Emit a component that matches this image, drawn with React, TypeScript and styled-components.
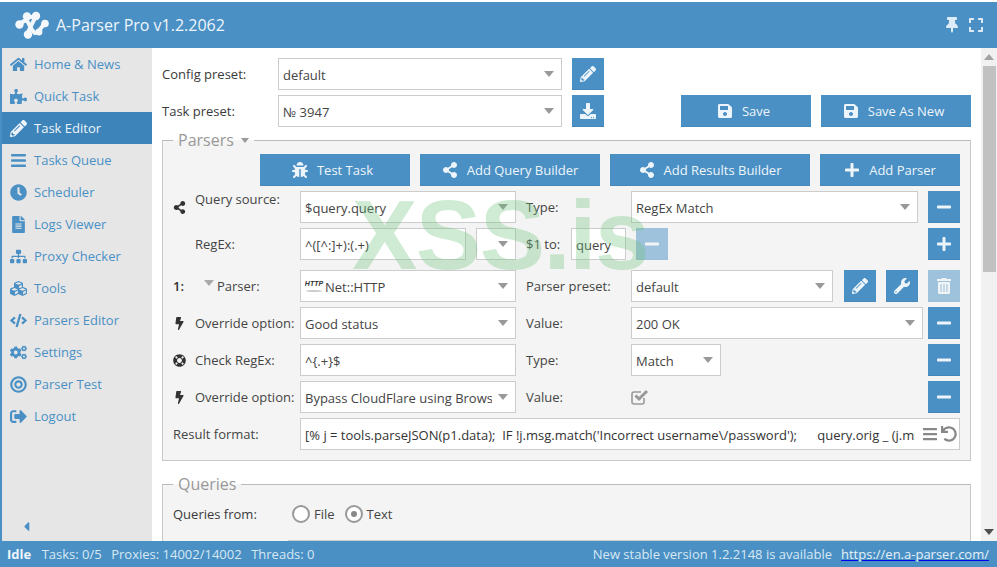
import React from 'react';
import styled, { createGlobalStyle } from 'styled-components';
import {
  FaHome, FaPuzzlePiece, FaPencilAlt, FaBars, FaClock, FaFileAlt, FaSitemap, FaCubes, FaCode, FaCogs,
  FaBullseye, FaSignOutAlt, FaShareAlt, FaBolt, FaLifeRing, FaBug, FaPlus, FaMinus, FaSave, FaDownload,
  FaWrench, FaTrashAlt, FaThumbtack, FaExpand, FaUndo, FaCaretLeft,
} from 'react-icons/fa';

const Global = createGlobalStyle`
  html, body { margin: 0; padding: 0; background: #fff; overflow: hidden; }
  * { box-sizing: border-box; }
  body { font-family: "Open Sans", "Liberation Sans", sans-serif; font-size: 13px; color: #444; }
`;

const Page = styled.div`
  width: 997px; height: 567px; padding-top: 2px;
  display: flex; flex-direction: column; overflow: hidden;
`;
const Header = styled.header`
  height: 46px; flex: none; background: #4a90c5; color: #fff;
  display: flex; align-items: center; padding: 0 13px 0 15px;
`;
const Title = styled.h1`
  margin: 0 0 0 7px; flex: 1; font-size: 16px; font-weight: 400; color: #eef5fa;
`;
const HeaderTools = styled.div`
  display: flex; align-items: center; gap: 8px; color: #dcebf5; font-size: 16px;
`;
const Body = styled.div`
  flex: 1; min-height: 0; display: flex;
`;
const Sidebar = styled.nav`
  width: 152px; flex: none; border-left: 2px solid #4a90c5; background: #e6e6e6;
  display: flex; flex-direction: column;
`;
const NavItem = styled.a<{ $active?: boolean }>`
  height: 32px; flex: none; display: flex; align-items: center; padding-left: 8px;
  background: ${p => (p.$active ? '#3c84ba' : 'transparent')};
  color: ${p => (p.$active ? '#eef5fa' : '#4a90c5')};
`;
const NavIcon = styled.span`
  width: 24px; flex: none; display: flex; align-items: center; font-size: 17px;
`;
const Collapse = styled.div`
  margin-top: auto; padding: 0 0 7px 17px; color: #4a90c5; font-size: 15px; line-height: 0;
`;
const Main = styled.main`
  flex: 1; min-width: 0; padding: 10px 10px 0; overflow: hidden; position: relative; background: #fff;
`;
const Scrollbar = styled.div`
  width: 16px; flex: none; background: #f1f1f1; display: flex; flex-direction: column; align-items: center;
`;
const ScrollUp = styled.div`
  margin-top: 6px; border: 5px solid transparent; border-top: 0; border-bottom: 6px solid #a3a3a3;
`;
const ScrollThumb = styled.div`
  width: 13px; height: 206px; margin-top: 6px; background: #c1c1c1;
`;
const ScrollDown = styled.div`
  margin-top: auto; margin-bottom: 6px; border: 5px solid transparent; border-bottom: 0; border-top: 6px solid #505050;
`;
const PresetRow = styled.div`
  display: flex; align-items: center; height: 32px; margin-bottom: 5px;
`;
const PresetLabel = styled.span`
  width: 116px; flex: none; color: #3a3a3a;
`;
const Select = styled.div<{ $w?: number }>`
  width: ${p => p.$w}px; flex: none;
  height: 32px; background: #fff; border: 1px solid #ccc;
  display: flex; align-items: center; padding: 0 6px 0 4px; color: #444; min-width: 0;
`;
const SelectText = styled.span`
  flex: 1; min-width: 0; overflow: hidden; white-space: nowrap; display: flex; align-items: center; padding-top: 1px;
`;
const Caret = styled.span`
  flex: none; width: 0; height: 0; border: 5px solid transparent; border-bottom: 0; border-top: 6px solid #999;
  margin-right: 1px; margin-left: 6px;
`;
const TextField = styled.input<{ $w?: number }>`
  width: ${p => p.$w}px; flex: none;
  height: 32px; background: #fff; border: 1px solid #ccc; padding: 1px 4px 0; margin: 0; outline: 0;
  font: inherit; color: #444; min-width: 0;
`;
const Btn = styled.button<{ $w?: number; $faded?: boolean; $nudge?: boolean }>`
  width: ${p => (p.$w ? `${p.$w}px` : '32px')}; height: 32px; flex: none; margin: 0;
  padding: 0 ${p => (p.$nudge ? '5px' : '0')} 0 0;
  border: 0; border-bottom: 1px solid #4687bb;
  background: #4a90c5; color: #eef5fa; font: inherit; font-size: 13px;
  opacity: ${p => (p.$faded ? 0.5 : 1)};
  display: inline-flex; align-items: center; justify-content: center; gap: 9px;
  svg { font-size: 16px; flex: none; }
`;
const PresetBtn = styled(Btn)`
  margin-left: 10px;
`;
const SaveGroup = styled.div`
  margin-left: auto; display: flex; gap: 10px;
`;
const Group = styled.fieldset<{ $top: number }>`
  margin: ${p => p.$top}px 0 0; min-width: 0; padding: 3px 10px 10px;
  background: #f4f4f4; border: 1px solid #c8c8c8; border-top-color: #bbb;
`;
const GroupLegend = styled.legend`
  padding: 0 5px; height: 22px; line-height: 22px; font-size: 16px; color: #999;
  display: flex; align-items: center; gap: 7px;
`;
const LegendCaret = styled.span`
  width: 0; height: 0; border: 4px solid transparent; border-bottom: 0; border-top: 5px solid #999;
  margin-top: 1px;
`;
const ActionBar = styled.div`
  display: flex; justify-content: flex-end; gap: 10px;
`;
const Row = styled.div<{ $top?: number }>`
  display: flex; align-items: center; height: 32px; margin-top: ${p => p.$top ?? 5}px;
`;
const LeadLabel = styled.div`
  width: 127px; flex: none; display: flex; align-items: center; color: #444;
`;
const LeadIcon = styled.span`
  width: 22px; flex: none; display: flex; align-items: center; color: #333; font-size: 13px; font-weight: 600;
`;
const Raised = styled.span`
  margin-bottom: 16px;
`;
const ParserCaret = styled.span`
  width: 0; height: 0; border: 5px solid transparent; border-bottom: 0; border-top: 6px solid #aaa;
  margin: 0 3px 6px 9px;
`;
const MidLabel = styled.span`
  width: 105px; flex: none; margin-left: 10px; color: #444;
`;
const ToLabel = styled.span`
  width: 45px; flex: none; margin-left: 10px; color: #444;
`;
const Gap = styled.span<{ $w: number }>`
  flex: none; width: ${p => p.$w}px;
`;
const Push = styled.span`
  flex: 1;
`;
const HttpIcon = styled.span`
  width: 18px; height: 14px; margin-right: 2px; flex: none; display: flex; flex-direction: column; align-items: center;
  font: italic 700 7px/8px "Liberation Sans", sans-serif; color: #333;
  &::after { content: ''; display: block; width: 16px; height: 2px; margin-top: 2px; background: #ccc; border-radius: 50%; }
`;
const ResultBox = styled.div`
  flex: 1; min-width: 0; height: 32px; background: #fff; border: 1px solid #ccc; display: flex; align-items: center;
  padding: 0 2px 0 4px;
`;
const ResultText = styled.span`
  flex: 1; min-width: 0; overflow: hidden; white-space: pre; color: #333; padding-top: 1px;
`;
const ResultTools = styled.span`
  flex: none; display: flex; align-items: center; gap: 3px; margin-left: 7px; color: #888; font-size: 16px;
`;
const ValueCheck = styled.span`
  display: flex; margin-right: auto;
`;
const QueriesLabel = styled.span`
  width: 119px; flex: none; color: #3a3a3a;
`;
const Radio = styled.span<{ $on?: boolean }>`
  width: 18px; height: 18px; border-radius: 50%; border: 2px solid #999; background: #fff; flex: none;
  margin-right: 4px; display: flex; align-items: center; justify-content: center;
  &::after { content: ''; width: 6px; height: 6px; border-radius: 50%; background: ${p => (p.$on ? '#888' : 'transparent')}; }
`;
const RadioLabel = styled.span`
  margin-right: 10px; color: #444;
`;
const QueryArea = styled.div`
  margin: 10px 0 0 115px; height: 60px; background: #fff; border: 1px solid #ccc;
`;
const Watermark = styled.div`
  position: absolute; left: 200px; top: 132px; pointer-events: none;
  font: 700 98px/110px "Liberation Sans", sans-serif; color: rgba(110, 195, 125, 0.33);
  white-space: nowrap; letter-spacing: -1.5px;
`;
const StatusBar = styled.footer`
  height: 26px; flex: none; background: #4a90c5; color: #d8e8f3; display: flex; align-items: center; padding: 0 8px 0 7px;
`;
const StatusItem = styled.span<{ $bold?: boolean }>`
  margin-right: ${p => (p.$bold ? 10.5 : 9.5)}px; font-weight: ${p => (p.$bold ? 700 : 400)}; color: ${p => (p.$bold ? '#eef5fa' : 'inherit')};
`;
const StatusLink = styled.a`
  margin-left: 9px; color: #e6f0f7; text-decoration: underline; text-decoration-color: #0000ee;
`;

const Logo = () => (
  <svg width="34" height="30" viewBox="0 0 34 30" fill="none">
    <g stroke="#f4f8fb" strokeWidth="4" strokeLinecap="round">
      <path d="M4 14 L11 10 C15 13 15 20 20 23 C24 22 26 18 29 14" />
      <path d="M12 7 L20 7 C19 12 14 17 13 24" />
    </g>
    <g fill="#f4f8fb">
      <circle cx="4.5" cy="14.5" r="4.2" />
      <circle cx="12" cy="6.5" r="4.2" />
      <circle cx="21" cy="6" r="4.2" />
      <circle cx="30" cy="13.5" r="3.8" />
      <circle cx="24" cy="22" r="3.4" />
      <circle cx="13" cy="24.5" r="4.2" />
    </g>
  </svg>
);

const CheckMark = () => (
  <svg width="18" height="17" viewBox="0 0 18 17" fill="none">
    <path d="M13 9 V13 A2 2 0 0 1 11 15 H3 A2 2 0 0 1 1 13 V5 A2 2 0 0 1 3 3 H10" stroke="#999" strokeWidth="1.6" />
    <path d="M4.5 6.5 L8 10 L16 2" stroke="#999" strokeWidth="3" />
  </svg>
);

const nav: [React.ComponentType, string][] = [
  [FaHome, 'Home & News'],
  [FaPuzzlePiece, 'Quick Task'],
  [FaPencilAlt, 'Task Editor'],
  [FaBars, 'Tasks Queue'],
  [FaClock, 'Scheduler'],
  [FaFileAlt, 'Logs Viewer'],
  [FaSitemap, 'Proxy Checker'],
  [FaCubes, 'Tools'],
  [FaCode, 'Parsers Editor'],
  [FaCogs, 'Settings'],
  [FaBullseye, 'Parser Test'],
  [FaSignOutAlt, 'Logout'],
];

const Sel = ({ value, w }: { value: React.ReactNode; w: number }) => (
  <Select $w={w}>
    <SelectText>{value}</SelectText>
    <Caret />
  </Select>
);

export default function App() {
  return (
    <Page>
      <Global />
      <Header>
        <Logo />
        <Title>A-Parser Pro v1.2.2062</Title>
        <HeaderTools>
          <FaThumbtack />
          <FaExpand />
        </HeaderTools>
      </Header>
      <Body>
        <Sidebar>
          {nav.map(([Icon, label]) => (
            <NavItem key={label} $active={label === 'Task Editor'}>
              <NavIcon><Icon /></NavIcon>
              {label}
            </NavItem>
          ))}
          <Collapse><FaCaretLeft /></Collapse>
        </Sidebar>
        <Main>
          <PresetRow>
            <PresetLabel>Config preset:</PresetLabel>
            <Sel value="default" w={284} />
            <PresetBtn><FaPencilAlt /></PresetBtn>
          </PresetRow>
          <PresetRow>
            <PresetLabel>Task preset:</PresetLabel>
            <Sel value="№ 3947" w={284} />
            <PresetBtn><FaDownload /></PresetBtn>
            <SaveGroup>
              <Btn $w={130} $nudge><FaSave />Save</Btn>
              <Btn $w={150} $nudge><FaSave />Save As New</Btn>
            </SaveGroup>
          </PresetRow>
          <Group $top={-3}>
            <GroupLegend>Parsers <LegendCaret /></GroupLegend>
            <ActionBar>
              <Btn $w={150} $nudge><FaBug />Test Task</Btn>
              <Btn $w={180}><FaShareAlt />Add Query Builder</Btn>
              <Btn $w={200}><FaShareAlt />Add Results Builder</Btn>
              <Btn $w={140}><FaPlus />Add Parser</Btn>
            </ActionBar>
            <Row>
              <LeadLabel>
                <LeadIcon><FaShareAlt /></LeadIcon>
                <Raised>Query source:</Raised>
              </LeadLabel>
              <Sel value="$query.query" w={216} />
              <MidLabel>Type:</MidLabel>
              <Sel value="RegEx Match" w={287} />
              <Gap $w={10} />
              <Btn><FaMinus /></Btn>
            </Row>
            <Row>
              <LeadLabel><LeadIcon />RegEx:</LeadLabel>
              <TextField $w={166} readOnly value="^([^:]+):(.+)" />
              <Gap $w={10} />
              <Sel value="" w={40} />
              <ToLabel>$1 to:</ToLabel>
              <TextField $w={55} readOnly value="query" />
              <Gap $w={10} />
              <Btn $faded><FaMinus /></Btn>
              <Push />
              <Btn><FaPlus /></Btn>
            </Row>
            <Row $top={10}>
              <LeadLabel>
                <LeadIcon>1:</LeadIcon>
                <ParserCaret />
                Parser:
              </LeadLabel>
              <Sel value={<><HttpIcon>HTTP</HttpIcon>Net::HTTP</>} w={216} />
              <MidLabel>Parser preset:</MidLabel>
              <Sel value="default" w={202} />
              <Gap $w={11} />
              <Btn><FaPencilAlt /></Btn>
              <Gap $w={10} />
              <Btn><FaWrench /></Btn>
              <Gap $w={10} />
              <Btn $faded><FaTrashAlt /></Btn>
            </Row>
            <Row>
              <LeadLabel><LeadIcon><FaBolt /></LeadIcon>Override option:</LeadLabel>
              <Sel value="Good status" w={216} />
              <MidLabel>Value:</MidLabel>
              <Sel value="200 OK" w={292} />
              <Gap $w={5} />
              <Btn><FaMinus /></Btn>
            </Row>
            <Row>
              <LeadLabel><LeadIcon><FaLifeRing /></LeadIcon>Check RegEx:</LeadLabel>
              <TextField $w={216} readOnly value="^{.+}$" />
              <MidLabel>Type:</MidLabel>
              <Sel value="Match" w={90} />
              <Push />
              <Btn><FaMinus /></Btn>
            </Row>
            <Row>
              <LeadLabel><LeadIcon><FaBolt /></LeadIcon>Override option:</LeadLabel>
              <Sel value="Bypass CloudFlare using Browser" w={216} />
              <MidLabel>Value:</MidLabel>
              <ValueCheck><CheckMark /></ValueCheck>
              <Btn><FaMinus /></Btn>
            </Row>
            <Row>
              <LeadLabel>Result format:</LeadLabel>
              <ResultBox>
                <ResultText>{"[% j = tools.parseJSON(p1.data);  IF !j.msg.match('Incorrect username\\/password');      query.orig _ (j.msg _ '\\n'"}</ResultText>
                <ResultTools><FaBars /><FaUndo /></ResultTools>
              </ResultBox>
            </Row>
          </Group>
          <Group $top={12}>
            <GroupLegend>Queries</GroupLegend>
            <Row $top={0}>
              <QueriesLabel>Queries from:</QueriesLabel>
              <Radio /><RadioLabel>File</RadioLabel>
              <Radio $on /><RadioLabel>Text</RadioLabel>
            </Row>
            <QueryArea />
          </Group>
          <Watermark>XSS.is</Watermark>
        </Main>
        <Scrollbar>
          <ScrollUp />
          <ScrollThumb />
          <ScrollDown />
        </Scrollbar>
      </Body>
      <StatusBar>
        <StatusItem $bold>Idle</StatusItem>
        <StatusItem>Tasks: 0/5</StatusItem>
        <StatusItem>Proxies: 14002/14002</StatusItem>
        <StatusItem>Threads: 0</StatusItem>
        <Push />
        <span>New stable version 1.2.2148 is available</span>
        <StatusLink>https://en.a-parser.com/</StatusLink>
      </StatusBar>
    </Page>
  );
}
